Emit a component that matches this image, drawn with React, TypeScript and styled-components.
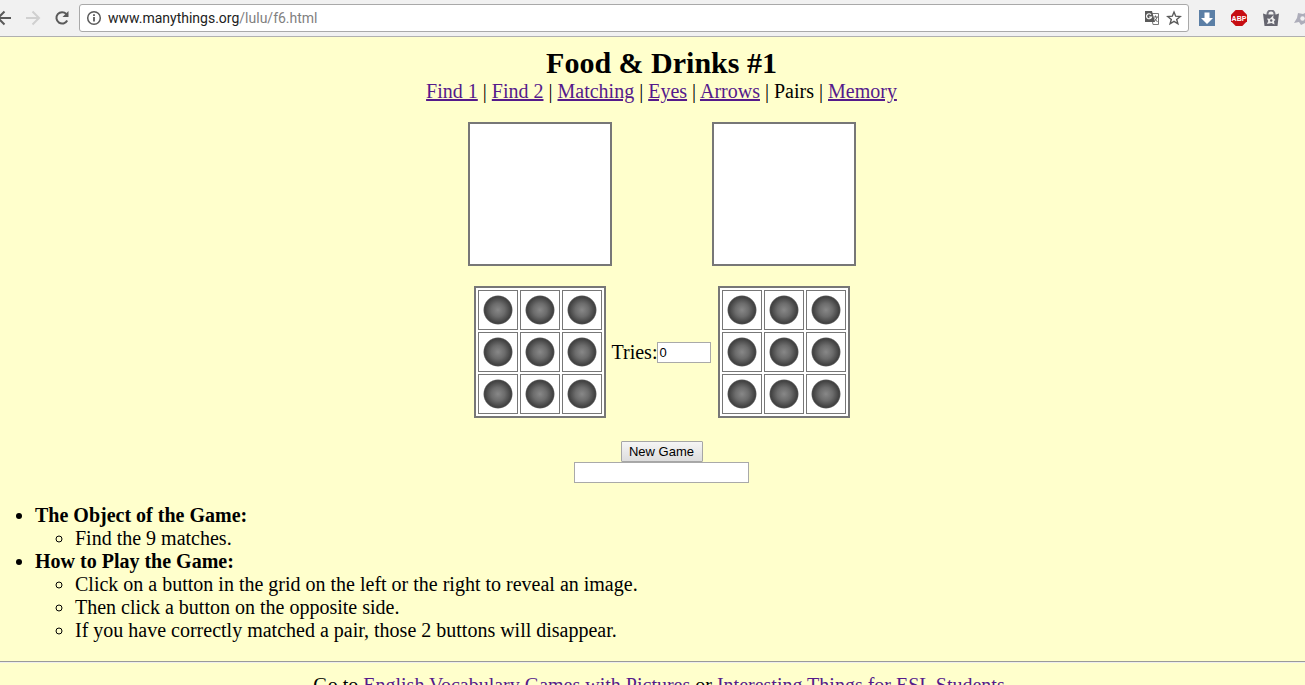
import React, { useState } from "react";
import styled, { createGlobalStyle } from "styled-components";

const GlobalStyle = createGlobalStyle`
  * { box-sizing: border-box; }
  html, body, #root { height: 100%; }
  body {
    margin: 0;
    overflow: hidden;
    background: #ffffcc;
    color: #000;
    font: 20px/23px "Liberation Serif", "Times New Roman", serif;
  }
`;

const Window = styled.div`
  display: flex;
  flex-direction: column;
  height: 100%;
`;

const Toolbar = styled.header`
  display: flex;
  align-items: center;
  flex: none;
  height: 37px;
  background: #f1f1f1;
  border-bottom: 1px solid #b0b0b0;
  overflow: hidden;
`;

const ToolButton = styled.button<{ $width: number }>`
  display: flex;
  align-items: center;
  justify-content: center;
  flex: none;
  width: ${(p) => p.$width}px;
  height: 28px;
  padding: 0;
  border: 0;
  background: none;

  svg { flex: none; }
`;

const NavGroup = styled.div`
  display: flex;
  flex: none;
  width: 79px;
  justify-content: flex-end;
`;

const AddressBar = styled.div`
  display: flex;
  align-items: center;
  flex: 1;
  height: 28px;
  border: 1px solid #a9a9a9;
  border-radius: 3px;
  background: #fff;
  padding-right: 3px;
`;

const Url = styled.div`
  flex: 1;
  color: #808080;
  font: 14px/18px Roboto, "Liberation Sans", sans-serif;

  b { color: #222; font-weight: 400; }
`;

const Extensions = styled.div`
  display: flex;
  flex: none;
  width: 116px;
  padding-left: 2px;
  overflow: hidden;
`;

const Page = styled.main`
  flex: 1;
  overflow: hidden;
`;

const Centered = styled.section`
  display: flex;
  flex-direction: column;
  align-items: center;
  padding: 8px 0 0 18px;
`;

const Title = styled.h1`
  margin: 0;
  font-size: 30px;
  line-height: 35px;
`;

const Nav = styled.nav`
  a { color: #551a8b; }
`;

const Board = styled.div`
  display: grid;
  grid-template-columns: 144px 100px 144px;
  row-gap: 20px;
  justify-items: center;
  align-items: center;
  margin: 19px 0 23px;
`;

const Preview = styled.div`
  width: 144px;
  height: 144px;
  border: 2px solid #777;
  background: #fff;
`;

const Grid = styled.div`
  display: grid;
  grid-template-columns: repeat(3, 40px);
  gap: 2px;
  padding: 2px;
  border: 2px solid #777;
  background: #fff;
`;

const Cell = styled.button`
  display: grid;
  place-items: center;
  height: 40px;
  padding: 0;
  border: 1px solid #777;
  background: #fff;
`;

const Dot = styled.span`
  width: 30px;
  height: 30px;
  border-radius: 50%;
  background: radial-gradient(circle closest-side, #888 0, #6c6c6c 45%, #424242 86%, #4a4a4a 92%, #fff 100%);
`;

const Tries = styled.label`
  display: flex;
  align-items: center;
  white-space: nowrap;
`;

const TextBox = styled.input<{ $width: number }>`
  width: ${(p) => p.$width}px;
  height: 21px;
  padding: 1px;
  border: 1px solid #a9a9a9;
  background: #fff;
  color: #000;
  font: 13px "Liberation Sans", Arial, sans-serif;
`;

const NewGame = styled.button`
  width: 82px;
  height: 21px;
  padding: 0;
  border: 1px solid #a6a6a6;
  border-radius: 1px;
  background: linear-gradient(#f5f5f5, #dddddd);
  color: #000;
  font: 13px "Liberation Sans", Arial, sans-serif;
`;

const Rules = styled.ul`
  margin: 21px 0 19px;
  padding-left: 35px;

  ul { padding-left: 40px; }
`;

const Rule = styled.hr`
  height: 2px;
  margin: 0;
  border: 0;
  border-top: 1px solid #9a9a9a;
  border-bottom: 1px solid #eeeeee;
`;

const Footer = styled.footer`
  padding: 11px 0 0 18px;
  text-align: center;
  white-space: nowrap;

  a { color: #551a8b; text-decoration: none; }
`;

const links = ["Find 1", "Find 2", "Matching", "Eyes", "Arrows", "Pairs", "Memory"];

const BackIcon = () => (
  <svg width="16" height="16" viewBox="0 0 16 16" fill="none" stroke="#5a5a5a" strokeWidth="2">
    <path d="M14 8H2M7.500 1.500 1 8l6.500 6.500" />
  </svg>
);
const ForwardIcon = () => (
  <svg width="16" height="16" viewBox="0 0 16 16" fill="none" stroke="#d0d0d0" strokeWidth="2">
    <path d="M1 8h12M7.500 1.500 14 8l-6.500 6.500" />
  </svg>
);
const ReloadIcon = () => (
  <svg width="16" height="16" viewBox="0 0 16 16">
    <path d="M12.200 10.500A5.700 5.700 0 1 1 11.300 4" fill="none" stroke="#5a5a5a" strokeWidth="2" />
    <path d="M13.500 1v6h-6z" fill="#5a5a5a" />
  </svg>
);
const InfoIcon = () => (
  <svg width="16" height="16" viewBox="0 0 16 16">
    <circle cx="8" cy="8" r="6.300" fill="none" stroke="#5a5a5a" strokeWidth="1.500" />
    <path d="M7.100 7h1.800v4.500H7.100zM7.100 4.300h1.800V6H7.100z" fill="#5a5a5a" />
  </svg>
);
const TranslateIcon = () => (
  <svg width="16" height="16" viewBox="0 0 16 16">
    <path d="M7 3.500h7.500v11H9z" fill="#fff" stroke="#777" />
    <path d="M1 1h7l3 11H1z" fill="#5a5a5a" />
    <path d="M7 4.600A2.500 2.500 0 1 0 7.500 7H5" fill="none" stroke="#fff" strokeWidth="1.200" />
    <path d="M9.500 7H14M11.500 5.500V7M13 7q-.5 2.500-2.500 4M10.500 8.500l3 3.500" fill="none" stroke="#666" />
  </svg>
);
const StarIcon = () => (
  <svg width="16" height="16" viewBox="0 0 16 16">
    <path d="m8 2 1.700 4.200 4.500.3-3.500 2.900 1.200 4.400L8 11.400l-3.900 2.400 1.200-4.400-3.500-2.900 4.500-.3z" fill="none" stroke="#5a5a5a" strokeWidth="1.400" />
  </svg>
);
const DownloadIcon = () => (
  <svg width="16" height="16" viewBox="0 0 16 16">
    <path d="M0 0h16v16H0z" fill="#5b7fa6" />
    <path d="M5.500 2.500h5V8H14l-6 6-6-6h3.500z" fill="#fff" />
  </svg>
);
const BlockIcon = () => (
  <svg width="16" height="16" viewBox="0 0 16 16">
    <path d="M4.700 0h6.600L16 4.700v6.600L11.300 16H4.700L0 11.300V4.700z" fill="#c70d12" />
    <text x="8" y="11" textAnchor="middle" fontFamily="Liberation Sans, sans-serif" fontWeight="700" fontSize="7" fill="#fff">ABP</text>
  </svg>
);
const BagIcon = () => (
  <svg width="16" height="16" viewBox="0 0 16 16">
    <path d="M4.500 5V4a3.500 3.500 0 0 1 7 0v1" fill="none" stroke="#777781" strokeWidth="2" />
    <path d="M0 3.500 3 4.500h10l3-1L14.500 16h-13z" fill="#666670" />
    <path d="m10.500 5-.3 3 2.300 2-1.500 1 .5 3.500L8.500 13 4 14l1.300-3L4 8.500l3 .2z" fill="#eee" />
    <circle cx="8.200" cy="10.500" r="1.200" fill="#666670" />
  </svg>
);
const MaskIcon = () => (
  <svg width="20" height="16" viewBox="0 0 20 16">
    <path d="m5 3 5 1 6-3v7l3 4-7 1-4 2-2-3-5 1 3-5z" fill="#adadba" />
    <circle cx="9.500" cy="8.500" r="2.200" fill="#f1f1f1" />
  </svg>
);

const ButtonGrid = ({ side }: { side: string }) => (
  <Grid>
    {Array.from({ length: 9 }, (_, i) => (
      <Cell key={i} type="button" aria-label={`${side} ${i + 1}`}>
        <Dot />
      </Cell>
    ))}
  </Grid>
);

export default function App() {
  const [tries, setTries] = useState("0");
  const [message, setMessage] = useState("");

  return (
    <Window>
      <GlobalStyle />
      <Toolbar>
        <NavGroup>
          <ToolButton $width={28} aria-label="Back"><BackIcon /></ToolButton>
          <ToolButton $width={28} aria-label="Forward"><ForwardIcon /></ToolButton>
          <ToolButton $width={32} aria-label="Reload"><ReloadIcon /></ToolButton>
        </NavGroup>
        <AddressBar>
          <ToolButton $width={28} aria-label="Site information"><InfoIcon /></ToolButton>
          <Url><b>www.manythings.org</b>/lulu/f6.html</Url>
          <ToolButton $width={22} aria-label="Translate"><TranslateIcon /></ToolButton>
          <ToolButton $width={22} aria-label="Bookmark"><StarIcon /></ToolButton>
        </AddressBar>
        <Extensions>
          <ToolButton $width={32} aria-label="Download"><DownloadIcon /></ToolButton>
          <ToolButton $width={32} aria-label="Ad blocker"><BlockIcon /></ToolButton>
          <ToolButton $width={32} aria-label="Shopping"><BagIcon /></ToolButton>
          <ToolButton $width={32} aria-label="Privacy"><MaskIcon /></ToolButton>
        </Extensions>
      </Toolbar>
      <Page>
        <Centered>
          <Title>Food &amp; Drinks #1</Title>
          <Nav>
            {links.map((name, i) => (
              <React.Fragment key={name}>
                {i > 0 && " | "}
                {name === "Pairs" ? name : <a href="#game">{name}</a>}
              </React.Fragment>
            ))}
          </Nav>
          <Board>
            <Preview />
            <span />
            <Preview />
            <ButtonGrid side="Left" />
            <Tries>
              Tries:
              <TextBox $width={54} value={tries} onChange={(e) => setTries(e.target.value)} />
            </Tries>
            <ButtonGrid side="Right" />
          </Board>
          <NewGame type="button" onClick={() => { setTries("0"); setMessage(""); }}>New Game</NewGame>
          <TextBox $width={175} aria-label="Message" value={message} onChange={(e) => setMessage(e.target.value)} />
        </Centered>
        <Rules>
          <li>
            <b>The Object of the Game:</b>
            <ul>
              <li>Find the 9 matches.</li>
            </ul>
          </li>
          <li>
            <b>How to Play the Game:</b>
            <ul>
              <li>Click on a button in the grid on the left or the right to reveal an image.</li>
              <li>Then click a button on the opposite side.</li>
              <li>If you have correctly matched a pair, those 2 buttons will disappear.</li>
            </ul>
          </li>
        </Rules>
        <Rule />
        <Footer>
          Go to <a href="#vocabulary">English Vocabulary Games with Pictures</a> or <a href="#esl">Interesting Things for ESL Students</a>.
        </Footer>
      </Page>
    </Window>
  );
}
